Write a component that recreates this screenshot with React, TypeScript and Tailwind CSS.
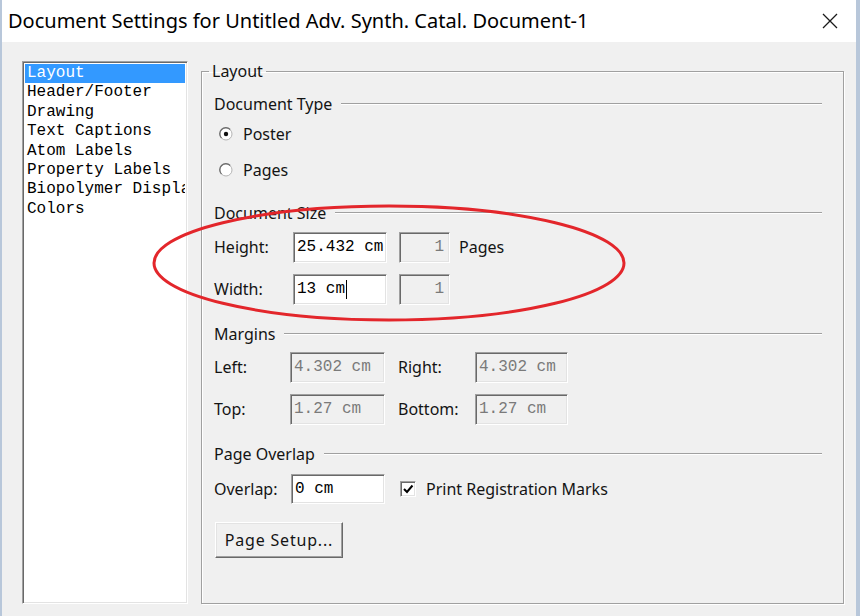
import React from "react";

const ui = "font-['Noto_Sans',sans-serif] text-[16px] text-[#141414]";
const mono = "font-['Liberation_Mono',monospace] text-[16px]";

const pages = [
  "Layout",
  "Header/Footer",
  "Drawing",
  "Text Captions",
  "Atom Labels",
  "Property Labels",
  "Biopolymer Display",
  "Colors",
];

function Heading({ title, className }: { title: string; className: string }) {
  return (
    <div className={`flex items-center h-[24px] ${className}`}>
      <span className="leading-none">{title}</span>
      <div className="ml-[9px] flex-1 h-[2px] border-t border-t-[#a0a0a0] border-b border-b-white" />
    </div>
  );
}

function Field({
  value,
  disabled,
  width,
  right,
  caret,
  tall,
}: {
  value: string;
  disabled?: boolean;
  width: string;
  right?: boolean;
  caret?: boolean;
  tall?: boolean;
}) {
  return (
    <div
      className={`${width} ${tall ? "h-[31px]" : "h-[30px]"} flex items-center border border-t-[#a0a0a0] border-l-[#a0a0a0] border-b-white border-r-white shadow-[inset_1px_1px_0_#696969,inset_-1px_-1px_0_#e3e3e3] ${
        disabled ? "bg-[#f0f0f0] text-[#7a7a7a]" : "bg-white text-black"
      } ${right ? "justify-end pr-[5px]" : "pl-[3px]"}`}
    >
      <span className={`${mono} leading-none whitespace-pre`}>{value}</span>
      {caret && <span className="ml-[1px] w-[1px] h-[19px] bg-black" />}
    </div>
  );
}

function Radio({ checked, label, className }: { checked?: boolean; label: string; className: string }) {
  return (
    <div className={`flex items-center h-[30px] pl-[5px] ${className}`}>
      <svg width="14" height="14" viewBox="0 0 14 14">
        <circle cx="7" cy="7" r="6" fill="#fff" stroke="#b4b4b4" strokeWidth="1" />
        <path d="M2.5 11.2 A6 6 0 0 1 11.2 2.5" fill="none" stroke="#6b6b6b" strokeWidth="1.2" />
        {checked && <circle cx="7" cy="7" r="2.2" fill="#111" />}
      </svg>
      <span className="ml-[10px]">{label}</span>
    </div>
  );
}

export default function App() {
  return (
    <div className={`relative w-[860px] h-[616px] flex flex-col overflow-hidden border-l-2 border-r-[4px] border-[#b8c7da] bg-[#f0f0f0] ${ui}`}>
      {/* title bar */}
      <div className="h-[42px] shrink-0 bg-white flex items-center justify-between pl-[6px] pr-[18px]">
        <span className="text-[20px] text-black">Document Settings for Untitled Adv. Synth. Catal. Document-1</span>
        <svg width="16" height="16" viewBox="0 0 16 16">
          <path d="M1 1 L15 15 M15 1 L1 15" stroke="#1a1a1a" strokeWidth="1.3" />
        </svg>
      </div>

      <div className="flex flex-1 pt-[19px] pl-[20px]">
        {/* page list */}
        <div className="w-[166px] h-[543px] bg-white border border-t-[#a0a0a0] border-l-[#a0a0a0] border-b-white border-r-white shadow-[inset_1px_1px_0_#696969,inset_-1px_-1px_0_#e3e3e3] p-[2px] overflow-hidden">
          {pages.map((p, i) => (
            <div
              key={p}
              className={`${mono} h-[19.4px] leading-[19.4px] pl-[2px] whitespace-nowrap overflow-hidden ${
                i === 0 ? "bg-[#3399ff] text-white" : "text-black"
              }`}
            >
              {p}
            </div>
          ))}
        </div>

        {/* layout group */}
        <fieldset className="ml-[13px] w-[643px] h-[543px] border border-[#a0a0a0] shadow-[inset_1px_1px_0_#fff,1px_1px_0_#fff] pl-[12px] pr-[21px] pt-[11px]">
          <legend className="ml-[-5px] px-[3px] h-[20px] leading-[20px]">Layout</legend>

          <Heading title="Document Type" className="" />
          <Radio checked label="Poster" className="mt-[3px]" />
          <Radio label="Pages" className="mt-[6px]" />

          <Heading title="Document Size" className="mt-[16px]" />
          <div className="flex items-center h-[32px] mt-[6px]">
            <span className="w-[79px]">Height:</span>
            <Field value="25.432 cm" width="w-[94px]" tall />
            <div className="ml-[12px]">
              <Field value="1" width="w-[51px]" disabled right tall />
            </div>
            <span className="ml-[9px]">Pages</span>
          </div>
          <div className="flex items-center h-[32px] mt-[10px]">
            <span className="w-[79px]">Width:</span>
            <Field value="13 cm" width="w-[94px]" caret tall />
            <div className="ml-[12px]">
              <Field value="1" width="w-[51px]" disabled right tall />
            </div>
          </div>

          <Heading title="Margins" className="mt-[17px]" />
          <div className="flex items-center h-[32px] mt-[5px]">
            <span className="w-[76px]">Left:</span>
            <Field value="4.302 cm" width="w-[95px]" disabled tall />
            <span className="ml-[13px] w-[77px]">Right:</span>
            <Field value="4.302 cm" width="w-[93px]" disabled tall />
          </div>
          <div className="flex items-center h-[32px] mt-[10px]">
            <span className="w-[76px]">Top:</span>
            <Field value="1.27 cm" width="w-[95px]" disabled tall />
            <span className="ml-[13px] w-[77px]">Bottom:</span>
            <Field value="1.27 cm" width="w-[93px]" disabled tall />
          </div>

          <Heading title="Page Overlap" className="mt-[17px]" />
          <div className="flex items-center h-[31px] mt-[7px]">
            <span className="w-[77px]">Overlap:</span>
            <Field value="0 cm" width="w-[94px]" />
            <div className="ml-[15px] w-[16px] h-[16px] bg-white border border-t-[#a0a0a0] border-l-[#a0a0a0] border-b-white border-r-white shadow-[inset_1px_1px_0_#696969,inset_-1px_-1px_0_#e3e3e3] flex items-center justify-center">
              <svg width="12" height="12" viewBox="0 0 12 12">
                <path d="M2 6 L5 9 L10.5 2.5" fill="none" stroke="#000" strokeWidth="2" />
              </svg>
            </div>
            <span className="ml-[10px]">Print Registration Marks</span>
          </div>

          <button className="mt-[18px] ml-[1px] w-[128px] h-[36px] bg-[#f0f0f0] border border-t-white border-l-white border-b-[#696969] border-r-[#696969] shadow-[inset_-1px_-1px_0_#a0a0a0,inset_1px_1px_0_#e3e3e3] text-[16px] tracking-[0.8px] text-[#141414]">
            Page Setup...
          </button>
        </fieldset>
      </div>

      {/* red annotation */}
      <svg className="absolute left-0 top-0 pointer-events-none" width="860" height="616">
        <ellipse cx="387" cy="263" rx="235" ry="57" fill="none" stroke="#e3262b" strokeWidth="3" />
      </svg>
    </div>
  );
}
